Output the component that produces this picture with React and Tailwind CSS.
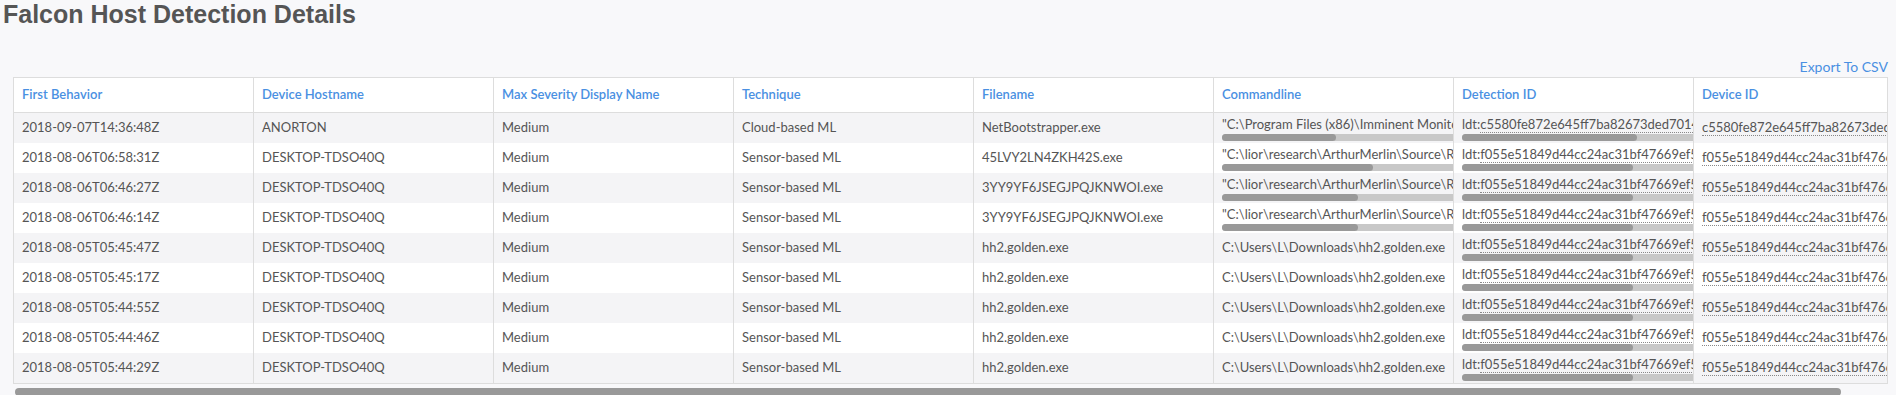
import React from "react";

const columns = [
  "First Behavior",
  "Device Hostname",
  "Max Severity Display Name",
  "Technique",
  "Filename",
  "Commandline",
  "Detection ID",
  "Device ID",
];

const cmdArthur = '"C:\\lior\\research\\ArthurMerlin\\Source\\Repos\\bin\\Debug\\3YY9YF6JSEGJPQJKNWOI.exe"';
const cmdGolden = "C:\\Users\\L\\Downloads\\hh2.golden.exe";
const devF = "f055e51849d44cc24ac31bf47669ef53";

const rows = [
  {
    time: "2018-09-07T14:36:48Z",
    host: "ANORTON",
    technique: "Cloud-based ML",
    file: "NetBootstrapper.exe",
    cmd: '"C:\\Program Files (x86)\\Imminent Monitor\\NetBootstrapper.exe" -start -silent -service',
    cmdThumb: 114,
    detection: "c5580fe872e645ff7ba82673ded70142:4294995120",
    detThumb: 175,
    device: "c5580fe872e645ff7ba82673ded70142",
  },
  { time: "2018-08-06T06:58:31Z", host: "DESKTOP-TDSO40Q", technique: "Sensor-based ML", file: "45LVY2LN4ZKH42S.exe", cmd: cmdArthur, cmdThumb: 151, detection: devF + ":4295051318", detThumb: 171, device: devF },
  { time: "2018-08-06T06:46:27Z", host: "DESKTOP-TDSO40Q", technique: "Sensor-based ML", file: "3YY9YF6JSEGJPQJKNWOI.exe", cmd: cmdArthur, cmdThumb: 136, detection: devF + ":4295049912", detThumb: 171, device: devF },
  { time: "2018-08-06T06:46:14Z", host: "DESKTOP-TDSO40Q", technique: "Sensor-based ML", file: "3YY9YF6JSEGJPQJKNWOI.exe", cmd: cmdArthur, cmdThumb: 136, detection: devF + ":4295049730", detThumb: 171, device: devF },
  { time: "2018-08-05T05:45:47Z", host: "DESKTOP-TDSO40Q", technique: "Sensor-based ML", file: "hh2.golden.exe", cmd: cmdGolden, cmdThumb: 0, detection: devF + ":4295038214", detThumb: 171, device: devF },
  { time: "2018-08-05T05:45:17Z", host: "DESKTOP-TDSO40Q", technique: "Sensor-based ML", file: "hh2.golden.exe", cmd: cmdGolden, cmdThumb: 0, detection: devF + ":4295038102", detThumb: 171, device: devF },
  { time: "2018-08-05T05:44:55Z", host: "DESKTOP-TDSO40Q", technique: "Sensor-based ML", file: "hh2.golden.exe", cmd: cmdGolden, cmdThumb: 0, detection: devF + ":4295037981", detThumb: 171, device: devF },
  { time: "2018-08-05T05:44:46Z", host: "DESKTOP-TDSO40Q", technique: "Sensor-based ML", file: "hh2.golden.exe", cmd: cmdGolden, cmdThumb: 0, detection: devF + ":4295037940", detThumb: 171, device: devF },
  { time: "2018-08-05T05:44:29Z", host: "DESKTOP-TDSO40Q", technique: "Sensor-based ML", file: "hh2.golden.exe", cmd: cmdGolden, cmdThumb: 0, detection: devF + ":4295037877", detThumb: 171, device: devF },
];

function MiniScroll({ thumb }) {
  return (
    <div className="mt-[1px] h-[7px] w-full shrink-0 rounded-l-full bg-[#c8c8c8]">
      <div className="h-full rounded-full bg-[#999]" style={{ width: thumb }} />
    </div>
  );
}

function Cell({ children }) {
  return (
    <div className="flex h-full w-[240px] shrink-0 items-center overflow-hidden whitespace-nowrap border-r border-[#ddd] px-2">
      {children}
    </div>
  );
}

function ScrollCell({ thumb, children }) {
  return (
    <div className="flex h-full w-[240px] shrink-0 flex-col justify-center overflow-hidden border-r border-[#ddd] pl-2">
      <div className="overflow-hidden whitespace-nowrap leading-[17px]">{children}</div>
      <MiniScroll thumb={thumb} />
    </div>
  );
}

export default function App() {
  return (
    <div className="min-h-screen bg-[#f8f8fa] font-['Lato',sans-serif] text-[13px] text-[#555]">
      <h1 className="h-[30px] pl-[3px] pt-[2px] font-['Liberation_Sans',Arial,sans-serif] text-[25px] font-bold leading-[25px] text-[#555]">
        Falcon Host Detection Details
      </h1>

      <div className="pl-[13px] pr-[8px]">
        <div className="flex h-[47px] items-end justify-end pb-[1px]">
          <a className="cursor-pointer text-[14px] leading-[18px] text-[#4a90e2]">Export To CSV</a>
        </div>

        <div className="overflow-hidden border border-[#ddd] bg-white">
          <div className="w-[1920px]">
            <div className="flex h-[35px] border-b border-[#ddd] bg-white font-semibold text-[#4a90e2]">
              {columns.map((c) => (
                <Cell key={c}>{c}</Cell>
              ))}
            </div>

            {rows.map((r, i) => (
              <div key={i} className={`flex h-[30px] ${i % 2 === 0 ? "bg-[#f4f4f6]" : "bg-white"}`}>
                <Cell>{r.time}</Cell>
                <Cell>{r.host}</Cell>
                <Cell>Medium</Cell>
                <Cell>{r.technique}</Cell>
                <Cell>{r.file}</Cell>
                {r.cmdThumb ? (
                  <ScrollCell thumb={r.cmdThumb}>{r.cmd}</ScrollCell>
                ) : (
                  <div className="flex h-full w-[240px] shrink-0 items-center overflow-hidden whitespace-nowrap border-r border-[#ddd] pl-2">
                    {r.cmd}
                  </div>
                )}
                <ScrollCell thumb={r.detThumb}>
                  ldt:<span className="border-b border-dotted border-[#888]">{r.detection}</span>
                </ScrollCell>
                <Cell>
                  <span className="border-b border-dotted border-[#888] leading-[15px]">{r.device}</span>
                </Cell>
              </div>
            ))}
          </div>
        </div>

        <div className="ml-[2px] mt-[4px] h-[8px] w-[1826px] rounded-full bg-[#999]" />
      </div>
    </div>
  );
}
